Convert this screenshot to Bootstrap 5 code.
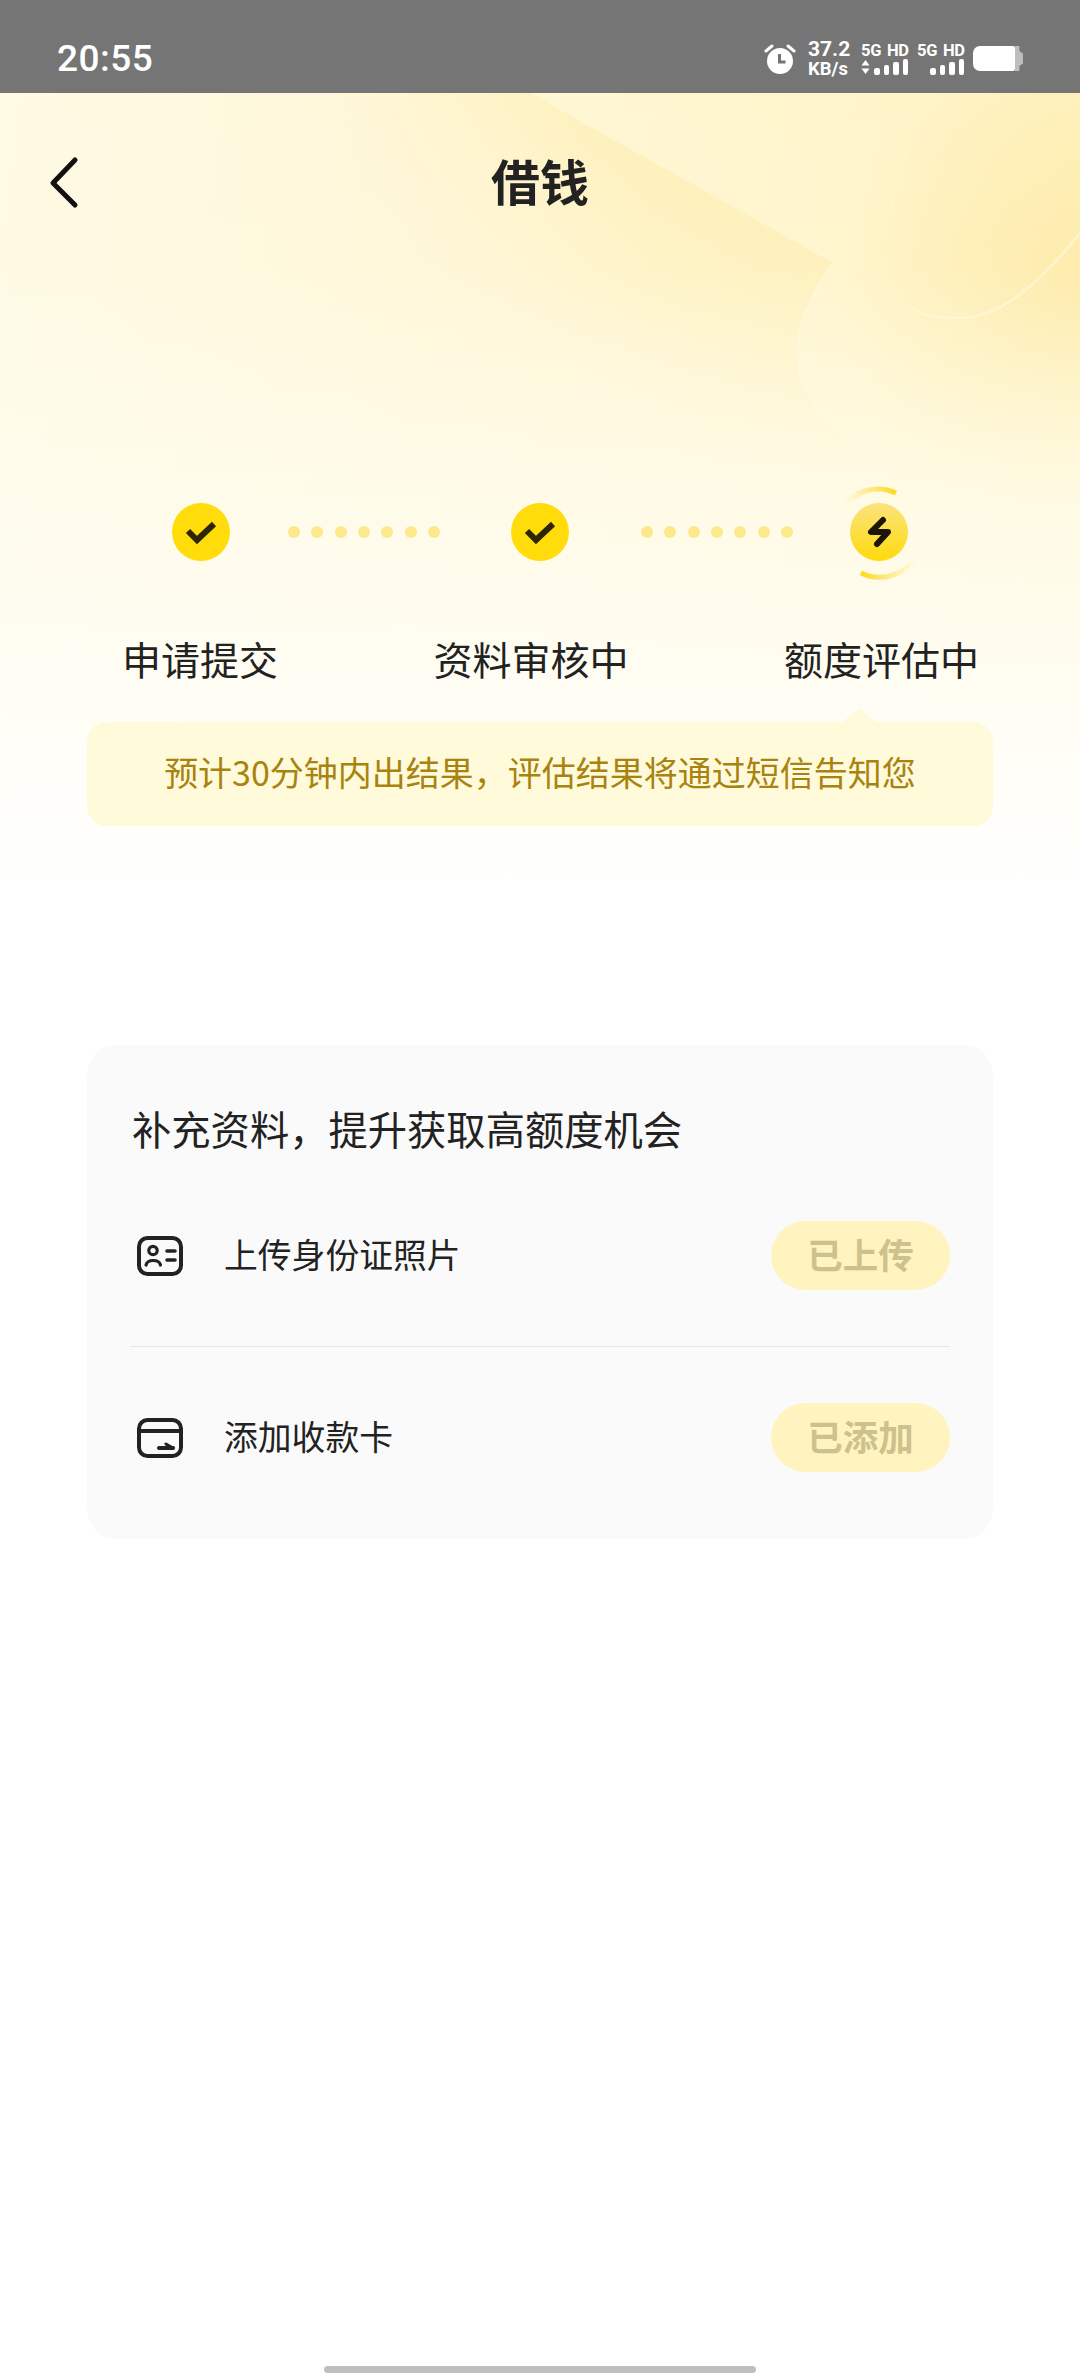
<!DOCTYPE html>
<html lang="zh-CN">
<head>
<meta charset="utf-8">
<title>借钱</title>
<link href="https://cdn.jsdelivr.net/npm/bootstrap@5.3.0/dist/css/bootstrap.min.css" rel="stylesheet">
<style>
html,body{margin:0;background:#fff}
body{font-family:"Noto Sans CJK SC","Liberation Sans",sans-serif;color:#1f1f1f}
.app-shell{width:1080px;height:2376px;overflow:hidden;background:#fff}
.deco-bg{top:93px;left:0;width:1080px;height:800px;z-index:0}
.layer-up{z-index:1}
.st-bar{height:93px;background:#757575;color:#fff;padding:24px 57px 0;font-family:Roboto,"Liberation Sans",sans-serif}
.st-time{font-size:37px;font-weight:500;line-height:1;letter-spacing:.5px}
.st-speed{width:40px;margin-left:12px;font-weight:700;text-align:center;line-height:1}
.st-speed b{font-weight:700;font-size:21px;display:block;height:21px}
.st-speed i{font-style:normal;font-size:18.5px;display:block}
.st-net{width:47px;margin-left:13px;line-height:1}
.st-net+.st-net{margin-left:9px}
.st-net-lbl{font-size:16.5px;font-weight:700;white-space:nowrap;height:16px;word-spacing:2px;letter-spacing:-.3px}
.st-sig{height:16px;gap:4px}
.st-sig i{display:block;width:5.5px;background:#fff;border-radius:2px}
.st-sig svg{margin-right:auto}
.st-batt{width:42px;height:25px;background:#fff;border-radius:7px 2px 2px 7px;margin-left:9px}
.st-batt-tip{width:8px;height:25px;background:#bdbdbd;border-radius:0 4px 4px 0;clip-path:polygon(0 0,55% 0,55% 20%,100% 30%,100% 70%,55% 80%,55% 100%,0 100%)}
.nav-head{height:178px;padding-left:48px}
.nav-title{font-size:49px;font-weight:700;line-height:1;color:#222;top:calc(50% - 3px);left:0;width:100%;text-align:center;transform:translateY(-50%)}
.step-track{padding-left:172px;height:58px;margin-top:232px}
.step-dot{width:58px;height:58px;border-radius:50%;background:#ffdc0a;flex:none}
.step-dot.is-now{background:linear-gradient(180deg,#fbe37e,#ffda0c)}
.step-dot svg{overflow:visible;display:block}
.dot-run{width:152px;flex:none;margin:0 71px 0 58px}
.dot-run.second{margin:0 57px 0 72px}
.dot-run i{display:block;width:12px;height:12px;border-radius:50%;background:#fde88c}
.step-names{padding:0 101px 0 122px;margin-top:72px;font-size:39px;line-height:50px;color:#222}
.note-box{margin:39px 87px 0;height:104px;background:#fffad9;border-radius:20px;color:#a9830f;font-size:34px;line-height:1;padding-bottom:5px}
.note-box::before{content:"";position:absolute;left:754px;top:-14px;width:36px;height:15px;background:#fffad9;clip-path:polygon(50% 0,100% 100%,0 100%)}
.extra-card{margin:219px 87px 0;height:494px;background:#fafafa;border-radius:30px;padding:58px 43px 0}
.extra-title{font-size:39.3px;line-height:50px;color:#222;padding-left:2px;margin-bottom:68px;white-space:nowrap}
.extra-row{height:69px}
.extra-row span.row-name{font-size:33.8px;color:#222;margin-left:41px;line-height:1;padding-bottom:4px}
.extra-row svg{margin-left:7px;flex:none}
.pill-done{width:179px;height:69px;background:#fff4bf;border-radius:35px;color:#cdc28e;font-size:35.5px;font-weight:700;border:0;line-height:1;padding:0 0 3px}
.row-rule{height:1px;background:#e8e8e8;margin:56px 0}
.home-bar{width:432px;height:7px;border-radius:4px;background:#bfbfbf;margin:auto auto 3px}
</style>
</head>
<body>
<div class="app-shell position-relative d-flex flex-column">
  <svg class="deco-bg position-absolute" viewBox="0 0 1080 800" width="1080" height="800" aria-hidden="true">
    <defs>
      <linearGradient id="baseG" x1="0" y1="0" x2="1" y2="0.1">
        <stop offset="0" stop-color="#fefae4"/><stop offset=".5" stop-color="#fff6d4"/><stop offset="1" stop-color="#fff3c2"/>
      </linearGradient>
      <radialGradient id="glowG" gradientUnits="userSpaceOnUse" cx="1090" cy="197" r="250">
        <stop offset="0" stop-color="#fde9a2"/><stop offset="1" stop-color="#fde9a2" stop-opacity="0"/>
      </radialGradient>
      <linearGradient id="bandG" gradientUnits="userSpaceOnUse" x1="680" y1="85" x2="575" y2="272">
        <stop offset="0" stop-color="#fdeeb2" stop-opacity=".75"/><stop offset="1" stop-color="#fdeeb2" stop-opacity="0"/>
      </linearGradient>
      <linearGradient id="bandM" gradientUnits="userSpaceOnUse" x1="320" y1="0" x2="650" y2="0">
        <stop offset="0" stop-color="#000"/><stop offset="1" stop-color="#fff"/>
      </linearGradient>
      <mask id="bandMask"><rect width="1080" height="800" fill="url(#bandM)"/></mask>
      <linearGradient id="fadeG" x1="0" y1="0" x2="0" y2="1">
        <stop offset="0" stop-color="#fff" stop-opacity="0"/><stop offset=".22" stop-color="#fffdf0" stop-opacity=".1"/><stop offset=".5" stop-color="#fffdf0" stop-opacity=".72"/><stop offset=".78" stop-color="#fffef8" stop-opacity=".93"/><stop offset="1" stop-color="#fff"/>
      </linearGradient>
    </defs>
    <rect width="1080" height="800" fill="url(#baseG)"/>
    <path d="M530 0 L833 170 C805 210 795 240 798 270 C800 300 815 325 850 345 L300 345 L300 0 Z" fill="url(#bandG)" mask="url(#bandMask)"/>
    <rect width="1080" height="800" fill="url(#glowG)"/>
    <rect width="1080" height="800" fill="url(#fadeG)"/>
    <path d="M1080 140 C1040 190 1000 225 960 225 C935 225 920 222 912 215" fill="none" stroke="#fff9dc" stroke-width="2.500" opacity=".7"/>
    <path d="M933 -3 C915 30 900 80 890 120" fill="none" stroke="#fff9dc" stroke-width="2" opacity=".3"/>
    <path d="M833 170 C805 210 795 240 798 270 C802 305 830 335 900 370 C960 400 1020 428 1080 457" fill="none" stroke="#fffbe4" stroke-width="2.500" opacity=".5"/>
  </svg>

  <div class="st-bar d-flex align-items-center layer-up">
    <span class="st-time">20:55</span>
    <svg class="ms-auto" width="32" height="30" viewBox="0 0 32 30" aria-hidden="true">
      <circle cx="16" cy="17" r="13" fill="#fff"/>
      <path d="M15.500 10v8h6" fill="none" stroke="#757575" stroke-width="3"/>
      <path d="M2 7l6-5M30 7l-6-5" stroke="#fff" stroke-width="3" stroke-linecap="round"/>
    </svg>
    <div class="st-speed"><b>37.2</b><i>KB/s</i></div>
    <div class="st-net">
      <div class="st-net-lbl">5G HD</div>
      <div class="st-sig d-flex align-items-end">
        <svg width="9" height="16" viewBox="0 0 9 16" aria-hidden="true"><path d="M4.500 1l4 5.500h-8zM4.500 15l4-5.500h-8z" fill="#fff"/></svg>
        <i style="height:7px"></i><i style="height:10px"></i><i style="height:13px"></i><i style="height:16px"></i>
      </div>
    </div>
    <div class="st-net">
      <div class="st-net-lbl">5G HD</div>
      <div class="st-sig d-flex align-items-end justify-content-end">
        <i style="height:7px"></i><i style="height:10px"></i><i style="height:13px"></i><i style="height:16px"></i>
      </div>
    </div>
    <div class="st-batt"></div><div class="st-batt-tip"></div>
  </div>

  <div class="nav-head d-flex align-items-center position-relative layer-up">
    <svg width="32" height="54" viewBox="0 0 32 54" aria-hidden="true"><path d="M27 5 L5 28 L27 50" fill="none" stroke="#111" stroke-width="5" stroke-linecap="round" stroke-linejoin="round"/></svg>
    <div class="nav-title position-absolute">借钱</div>
  </div>

  <div class="step-track d-flex align-items-center layer-up">
    <div class="step-dot"><svg width="58" height="58" viewBox="-29 -29 58 58" aria-hidden="true"><path d="M-13 -1 L-4 8 L13 -8" fill="none" stroke="#2d2605" stroke-width="6"/></svg></div>
    <div class="dot-run d-flex justify-content-between"><i></i><i></i><i></i><i></i><i></i><i></i><i></i></div>
    <div class="step-dot"><svg width="58" height="58" viewBox="-29 -29 58 58" aria-hidden="true"><path d="M-13 -1 L-4 8 L13 -8" fill="none" stroke="#2d2605" stroke-width="6"/></svg></div>
    <div class="dot-run second d-flex justify-content-between"><i></i><i></i><i></i><i></i><i></i><i></i><i></i></div>
    <div class="step-dot is-now"><svg width="58" height="58" viewBox="-29 -29 58 58" aria-hidden="true">
      <defs>
        <linearGradient id="ringA" gradientUnits="userSpaceOnUse" x1="17" y1="-39" x2="-36" y2="-25"><stop offset="0" stop-color="#ffd91a"/><stop offset="1" stop-color="#ffe36a" stop-opacity="0"/></linearGradient>
        <linearGradient id="ringB" gradientUnits="userSpaceOnUse" x1="-18" y1="41" x2="37" y2="25"><stop offset="0" stop-color="#ffd91a"/><stop offset="1" stop-color="#ffe36a" stop-opacity="0"/></linearGradient>
      </defs>
      <path d="M17 -39 A43 43 0 0 0 -36 -25" fill="none" stroke="url(#ringA)" stroke-width="5"/>
      <path d="M-18 41 A43 43 0 0 0 37 25" fill="none" stroke="url(#ringB)" stroke-width="5"/>
      <path d="M4 -12 L-8 0 L9 0 L-2 12" fill="none" stroke="#1c1605" stroke-width="6" stroke-linecap="round" stroke-linejoin="round"/>
    </svg></div>
  </div>

  <div class="step-names d-flex justify-content-between layer-up">
    <span>申请提交</span><span>资料审核中</span><span>额度评估中</span>
  </div>

  <div class="note-box position-relative d-flex align-items-center justify-content-center layer-up">预计30分钟内出结果&#xFF0C;评估结果将通过短信告知您</div>

  <div class="extra-card layer-up">
    <div class="extra-title">补充资料&#xFF0C;提升获取高额度机会</div>
    <div class="extra-row d-flex align-items-center">
      <svg width="46" height="40" viewBox="0 0 46 40" aria-hidden="true">
        <rect x="2" y="2" width="42" height="36" rx="8.500" fill="none" stroke="#222" stroke-width="4"/>
        <circle cx="16" cy="14.500" r="4.200" fill="none" stroke="#222" stroke-width="3.200"/>
        <path d="M9 29c1.500-6 13-6 14.500 0" fill="none" stroke="#222" stroke-width="3.200" stroke-linecap="round"/>
        <path d="M30 15h8M30 24h8" stroke="#222" stroke-width="3.600" stroke-linecap="round"/>
      </svg>
      <span class="row-name flex-grow-1">上传身份证照片</span>
      <button type="button" class="pill-done d-flex align-items-center justify-content-center">已上传</button>
    </div>
    <div class="row-rule"></div>
    <div class="extra-row d-flex align-items-center">
      <svg width="46" height="40" viewBox="0 0 46 40" aria-hidden="true">
        <rect x="2" y="2" width="42" height="36" rx="8.500" fill="none" stroke="#222" stroke-width="4"/>
        <path d="M2 13h42" stroke="#222" stroke-width="4"/>
        <path d="M22 30h14" stroke="#222" stroke-width="4" stroke-linecap="round"/>
        <path d="M29 26l7 4" stroke="#222" stroke-width="3" stroke-linecap="round"/>
      </svg>
      <span class="row-name flex-grow-1">添加收款卡</span>
      <button type="button" class="pill-done d-flex align-items-center justify-content-center">已添加</button>
    </div>
  </div>

  <div class="home-bar"></div>
</div>
<script src="https://cdn.jsdelivr.net/npm/bootstrap@5.3.0/dist/js/bootstrap.bundle.min.js"></script>
</body>
</html>
